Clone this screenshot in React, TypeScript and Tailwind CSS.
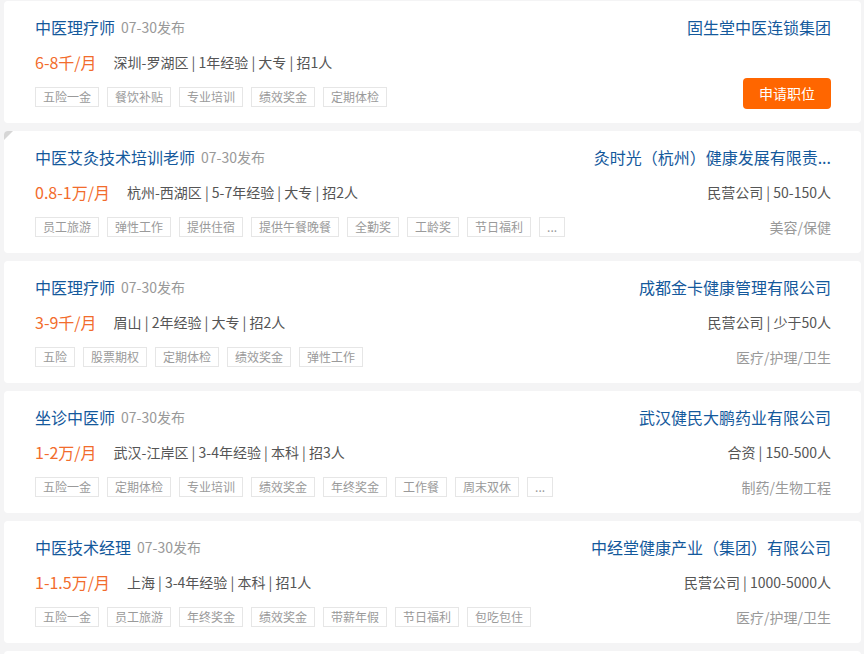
import React from "react";

type Job = {
  title: string;
  salary: string;
  info: string;
  tags: string[];
  company: string;
  companyInfo?: string;
  industry?: string;
  apply?: boolean;
  corner?: boolean;
};

const jobs: Job[] = [
  {
    title: "中医理疗师",
    salary: "6-8千/月",
    info: "深圳-罗湖区 | 1年经验 | 大专 | 招1人",
    tags: ["五险一金", "餐饮补贴", "专业培训", "绩效奖金", "定期体检"],
    company: "固生堂中医连锁集团",
    apply: true,
  },
  {
    title: "中医艾灸技术培训老师",
    salary: "0.8-1万/月",
    info: "杭州-西湖区 | 5-7年经验 | 大专 | 招2人",
    tags: ["员工旅游", "弹性工作", "提供住宿", "提供午餐晚餐", "全勤奖", "工龄奖", "节日福利", "..."],
    company: "灸时光（杭州）健康发展有限责...",
    companyInfo: "民营公司 | 50-150人",
    industry: "美容/保健",
    corner: true,
  },
  {
    title: "中医理疗师",
    salary: "3-9千/月",
    info: "眉山 | 2年经验 | 大专 | 招2人",
    tags: ["五险", "股票期权", "定期体检", "绩效奖金", "弹性工作"],
    company: "成都金卡健康管理有限公司",
    companyInfo: "民营公司 | 少于50人",
    industry: "医疗/护理/卫生",
  },
  {
    title: "坐诊中医师",
    salary: "1-2万/月",
    info: "武汉-江岸区 | 3-4年经验 | 本科 | 招3人",
    tags: ["五险一金", "定期体检", "专业培训", "绩效奖金", "年终奖金", "工作餐", "周末双休", "..."],
    company: "武汉健民大鹏药业有限公司",
    companyInfo: "合资 | 150-500人",
    industry: "制药/生物工程",
  },
  {
    title: "中医技术经理",
    salary: "1-1.5万/月",
    info: "上海 | 3-4年经验 | 本科 | 招1人",
    tags: ["五险一金", "员工旅游", "年终奖金", "绩效奖金", "带薪年假", "节日福利", "包吃包住"],
    company: "中经堂健康产业（集团）有限公司",
    companyInfo: "民营公司 | 1000-5000人",
    industry: "医疗/护理/卫生",
  },
];

function Card({ job }: { job: Job }) {
  return (
    <div className="relative flex h-[122px] shrink-0 justify-between overflow-hidden rounded-[4px] bg-white pl-[31px] pr-[30px] pt-[16px]">
      {job.corner && (
        <div className="absolute left-0 top-0 h-[9px] w-[9px] bg-[#d6d6d6] [clip-path:polygon(0_0,100%_0,0_100%)]" />
      )}
      <div className="flex flex-col">
        <div className="flex h-[20px] items-center leading-[20px]">
          <span className="text-[16px] text-[#14599c]">{job.title}</span>
          <span className="ml-[6px] text-[14px] text-[#999999]">07-30发布</span>
        </div>
        <div className="mt-[15px] flex h-[20px] items-center leading-[20px]">
          <span className="text-[16px] text-[#f26c2c]">{job.salary}</span>
          <span className="ml-[17px] text-[14px] text-[#555555]">{job.info}</span>
        </div>
        <div className="mt-[15px] flex gap-[8px]">
          {job.tags.map((t, i) => (
            <span
              key={i}
              className="flex h-[20px] items-center border border-[#e6e6e6] px-[7px] text-[12px] leading-[18px] text-[#9a9a9a]"
            >
              {t}
            </span>
          ))}
        </div>
      </div>
      <div className="flex flex-col items-end">
        <div className="h-[20px] whitespace-nowrap text-[16px] leading-[20px] text-[#14599c]">{job.company}</div>
        {job.apply ? (
          <button className="mt-[41px] flex h-[31px] w-[88px] items-center justify-center rounded-[4px] bg-[#ff6600] text-[14px] text-white">
            申请职位
          </button>
        ) : (
          <>
            <div className="mt-[15px] h-[20px] text-[14px] leading-[20px] text-[#555555]">{job.companyInfo}</div>
            <div className="mt-[15px] h-[20px] text-[14px] leading-[20px] text-[#999999]">{job.industry}</div>
          </>
        )}
      </div>
    </div>
  );
}

export default function App() {
  return (
    <div
      className="flex h-[654px] w-[864px] flex-col gap-[8px] overflow-hidden bg-[#f4f4f5] pl-[4px] pr-[3px] pt-px"
      style={{ fontFamily: '"Noto Sans CJK SC", "Noto Sans", sans-serif' }}
    >
      {jobs.map((j, i) => (
        <Card key={i} job={j} />
      ))}
      <div className="h-[122px] shrink-0 rounded-[4px] bg-white" />
    </div>
  );
}
